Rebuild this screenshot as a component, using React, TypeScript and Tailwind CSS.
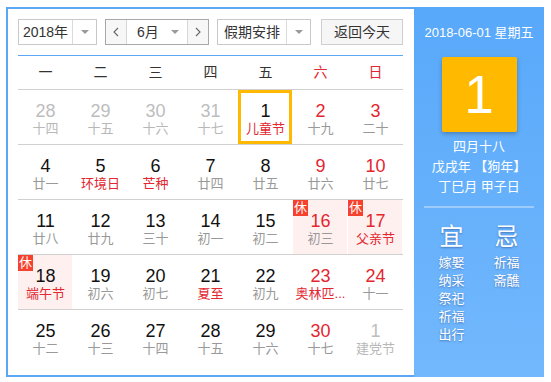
import React from "react";

type NC = "k" | "r" | "g";
type LC = "g" | "r" | "lg";
type Day = { n: number; l: string; nc: NC; lc: LC; rest?: boolean; sel?: boolean };

const numCls: Record<NC, string> = {
  k: "text-[#111]",
  r: "text-[#e3262f]",
  g: "text-[#bdbdbd]",
};
const lunCls: Record<LC, string> = {
  g: "text-[#999]",
  r: "text-[#e3262f]",
  lg: "text-[#b8b8b8]",
};

const rows: Day[][] = [
  [
    { n: 28, l: "十四", nc: "g", lc: "lg" },
    { n: 29, l: "十五", nc: "g", lc: "lg" },
    { n: 30, l: "十六", nc: "g", lc: "lg" },
    { n: 31, l: "十七", nc: "g", lc: "lg" },
    { n: 1, l: "儿童节", nc: "k", lc: "r", sel: true },
    { n: 2, l: "十九", nc: "r", lc: "g" },
    { n: 3, l: "二十", nc: "r", lc: "g" },
  ],
  [
    { n: 4, l: "廿一", nc: "k", lc: "g" },
    { n: 5, l: "环境日", nc: "k", lc: "r" },
    { n: 6, l: "芒种", nc: "k", lc: "r" },
    { n: 7, l: "廿四", nc: "k", lc: "g" },
    { n: 8, l: "廿五", nc: "k", lc: "g" },
    { n: 9, l: "廿六", nc: "r", lc: "g" },
    { n: 10, l: "廿七", nc: "r", lc: "g" },
  ],
  [
    { n: 11, l: "廿八", nc: "k", lc: "g" },
    { n: 12, l: "廿九", nc: "k", lc: "g" },
    { n: 13, l: "三十", nc: "k", lc: "g" },
    { n: 14, l: "初一", nc: "k", lc: "g" },
    { n: 15, l: "初二", nc: "k", lc: "g" },
    { n: 16, l: "初三", nc: "r", lc: "g", rest: true },
    { n: 17, l: "父亲节", nc: "r", lc: "r", rest: true },
  ],
  [
    { n: 18, l: "端午节", nc: "k", lc: "r", rest: true },
    { n: 19, l: "初六", nc: "k", lc: "g" },
    { n: 20, l: "初七", nc: "k", lc: "g" },
    { n: 21, l: "夏至", nc: "k", lc: "r" },
    { n: 22, l: "初九", nc: "k", lc: "g" },
    { n: 23, l: "奥林匹...", nc: "r", lc: "r" },
    { n: 24, l: "十一", nc: "r", lc: "g" },
  ],
  [
    { n: 25, l: "十二", nc: "k", lc: "g" },
    { n: 26, l: "十三", nc: "k", lc: "g" },
    { n: 27, l: "十四", nc: "k", lc: "g" },
    { n: 28, l: "十五", nc: "k", lc: "g" },
    { n: 29, l: "十六", nc: "k", lc: "g" },
    { n: 30, l: "十七", nc: "r", lc: "g" },
    { n: 1, l: "建党节", nc: "g", lc: "lg" },
  ],
];

function Tri() {
  return (
    <svg width="8" height="4" viewBox="0 0 8 4">
      <path d="M0 0 L8 0 L4 4 Z" fill="#9a9a9a" />
    </svg>
  );
}

function Chev({ dir }: { dir: "l" | "r" }) {
  return (
    <svg width="6" height="10" viewBox="0 0 6 10">
      <polyline
        points={dir === "l" ? "5,1 1,5 5,9" : "1,1 5,5 1,9"}
        fill="none"
        stroke="#666"
        strokeWidth="1.1"
      />
    </svg>
  );
}

function Cell({ d }: { d: Day }) {
  return (
    <div className="relative flex h-[54px] w-[55px] flex-col items-center pt-[11px]">
      {d.rest && <div className="absolute inset-y-0 left-0 right-[1px] bg-[#fff0f0]" />}
      {d.rest && (
        <span className="absolute left-0 top-0 h-[16px] w-[15px] bg-[#f5412d] text-center text-[13px] leading-[16px] text-white">
          休
        </span>
      )}
      {d.sel && <div className="absolute inset-y-0 left-0 right-[1px] border-[3px] border-[#ffb900]" />}
      <span className={`relative text-[18px] leading-[20px] ${numCls[d.nc]}`}>{d.n}</span>
      <span className={`relative whitespace-nowrap text-[13px] leading-[15px] ${lunCls[d.lc]}`}>{d.l}</span>
    </div>
  );
}

export default function App() {
  const week = ["一", "二", "三", "四", "五", "六", "日"];
  return (
    <div className="font-['Liberation_Sans','Noto_Sans_CJK_SC',sans-serif]">
      <div className="ml-[6px] mt-[7px] flex h-[370px] w-[538px] border-2 border-[#5aa7f6] bg-white">
        <div className="w-[406px] pl-[10px] pt-[10px]">
          <div className="flex h-[26px] items-stretch">
            <div className="flex w-[79px] border border-[#c9c9c9] bg-white">
              <div className="flex flex-1 items-center justify-center text-[14px] text-[#333]">2018年</div>
              <div className="flex w-[24px] items-center justify-center border-l border-[#dadada]">
                <Tri />
              </div>
            </div>
            <div className="ml-[8px] flex w-[104px] border border-[#a8a8a8] bg-white">
              <div className="flex w-[21px] items-center justify-center border-r border-[#d6d6d6] bg-[#f7f7f7]">
                <Chev dir="l" />
              </div>
              <div className="flex flex-1 items-center pl-[10px] pr-[8px] text-[14px] text-[#333]">
                <span>6月</span>
                <span className="ml-auto flex">
                  <Tri />
                </span>
              </div>
              <div className="flex w-[21px] items-center justify-center border-l border-[#d6d6d6] bg-[#f7f7f7]">
                <Chev dir="r" />
              </div>
            </div>
            <div className="ml-[8px] flex w-[94px] border border-[#c9c9c9] bg-white">
              <div className="flex flex-1 items-center justify-center text-[14px] text-[#333]">假期安排</div>
              <div className="flex w-[24px] items-center justify-center border-l border-[#dadada]">
                <Tri />
              </div>
            </div>
            <div className="ml-[10px] flex w-[82px] items-center justify-center border border-[#cfcfcf] bg-[#f6f6f6] text-[14px] text-[#333]">
              返回今天
            </div>
          </div>

          <div className="mt-[10px] w-[385px] border-t border-[#5aa7f6]">
            <div className="grid h-[34px] grid-cols-7 border-b border-[#d0d0d0]">
              {week.map((w, i) => (
                <div
                  key={w}
                  className={`flex items-center justify-center text-[14px] ${i >= 5 ? "text-[#e3262f]" : "text-[#333]"}`}
                >
                  {w}
                </div>
              ))}
            </div>
            {rows.map((r, ri) => (
              <div
                key={ri}
                className={`grid grid-cols-7 ${ri < rows.length - 1 ? "border-b border-[#d0d0d0]" : ""}`}
              >
                {r.map((d, di) => (
                  <Cell key={di} d={d} />
                ))}
              </div>
            ))}
          </div>
        </div>

        <div className="-mr-[2px] -mt-[2px] -mb-[2px] flex w-[130px] flex-col items-center bg-gradient-to-b from-[#58a8fa] to-[#72b8fd] pt-[17px] text-white">
          <div className="text-[13px] leading-[18px]">2018-06-01 星期五</div>
          <div className="mt-[15px] flex h-[75px] w-[75px] items-center justify-center rounded-[2px] bg-[#ffba00] text-[53px] leading-none shadow-[0_2px_4px_rgba(0,0,0,0.25)]">
            1
          </div>
          <div className="mt-[5px] text-[13px] leading-[20px]">四月十八</div>
          <div className="text-[13px] leading-[20px]">戊戌年 【狗年】</div>
          <div className="text-[13px] leading-[20px]">丁巳月 甲子日</div>
          <div className="mt-[9px] h-[2px] w-[110px] bg-[#9dccfc]" />
          <div className="mt-[14px] flex w-[110px] [text-shadow:0_1px_2px_rgba(0,0,60,0.35)]">
            <div className="flex w-[55px] flex-col items-center">
              <div className="text-[24px] leading-[30px]">宜</div>
              <div className="mt-[2px] flex flex-col items-center text-[13px] leading-[18px]">
                <span>嫁娶</span>
                <span>纳采</span>
                <span>祭祀</span>
                <span>祈福</span>
                <span>出行</span>
              </div>
            </div>
            <div className="flex w-[55px] flex-col items-center">
              <div className="text-[24px] leading-[30px]">忌</div>
              <div className="mt-[2px] flex flex-col items-center text-[13px] leading-[18px]">
                <span>祈福</span>
                <span>斋醮</span>
              </div>
            </div>
          </div>
        </div>
      </div>
    </div>
  );
}
